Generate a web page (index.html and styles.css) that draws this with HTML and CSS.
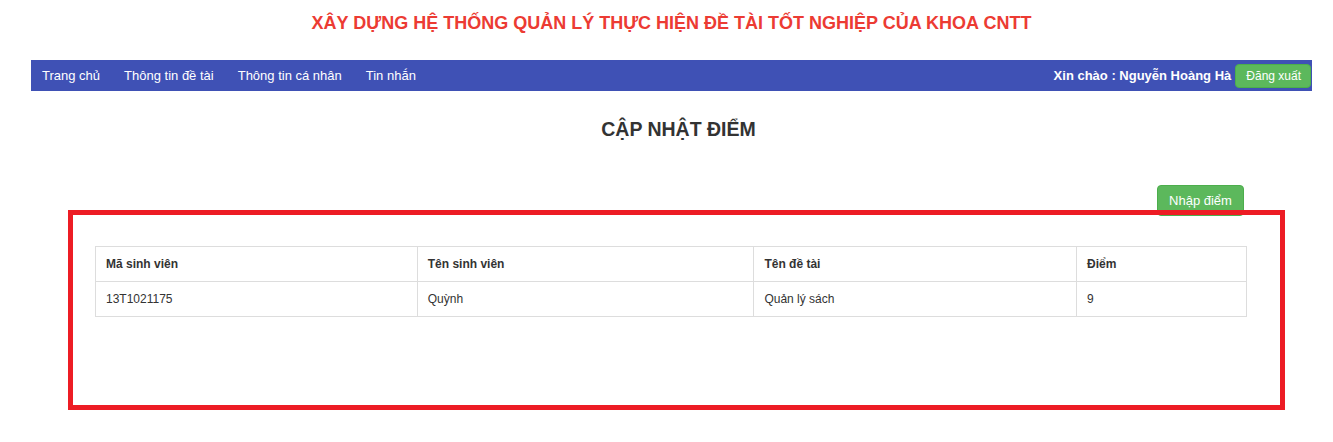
FILE: index.html
```html
<!DOCTYPE html>
<html lang="vi">
<head>
<meta charset="utf-8">
<title>Cập nhật điểm</title>
<link rel="stylesheet" href="styles.css">
</head>
<body>
<header class="site-header">
  <h1 class="site-title">XÂY DỰNG HỆ THỐNG QUẢN LÝ THỰC HIỆN ĐỀ TÀI TỐT NGHIỆP CỦA KHOA CNTT</h1>
</header>
<nav class="navbar">
  <ul class="nav-links">
    <li><a href="#">Trang chủ</a></li>
    <li><a href="#">Thông tin đề tài</a></li>
    <li><a href="#">Thông tin cá nhân</a></li>
    <li><a href="#">Tin nhắn</a></li>
  </ul>
  <div class="nav-user">
    <span class="greeting">Xin chào : Nguyễn Hoàng Hà</span>
    <a href="#" class="btn btn-logout">Đăng xuất</a>
  </div>
</nav>
<main class="main">
  <h2 class="page-title">CẬP NHẬT ĐIỂM</h2>
  <section class="grade-section">
    <div class="actions">
      <a href="#" class="btn btn-enter">Nhập điểm</a>
    </div>
    <table class="grade-table">
      <thead>
        <tr>
          <th class="col-id">Mã sinh viên</th>
          <th class="col-name">Tên sinh viên</th>
          <th class="col-topic">Tên đề tài</th>
          <th class="col-score">Điểm</th>
        </tr>
      </thead>
      <tbody>
        <tr>
          <td>13T1021175</td>
          <td>Quỳnh</td>
          <td>Quản lý sách</td>
          <td>9</td>
        </tr>
      </tbody>
    </table>
    <div class="highlight-box"></div>
  </section>
</main>
</body>
</html>
```

FILE: styles.css
```css
* { box-sizing: border-box; }
body {
  margin: 0;
  font-family: "Liberation Sans", Arial, sans-serif;
  color: #333;
  background: #fff;
}
a { text-decoration: none; }

.site-header {
  height: 60px;
  padding: 13px 0 0 10px;
}
.site-title {
  margin: 0;
  font-size: 18px;
  line-height: 20px;
  font-weight: bold;
  color: #ec3b33;
  text-align: center;
}

.navbar {
  margin: 0 21px 0 31px;
  height: 31px;
  background: #3f51b5;
  display: flex;
  justify-content: space-between;
  align-items: center;
  padding: 0 1px 0 11px;
}
.nav-links {
  list-style: none;
  margin: 0;
  padding: 0;
  display: flex;
  gap: 24px;
}
.nav-links a {
  color: #fff;
  font-size: 13px;
  line-height: 31px;
}
.nav-user {
  display: flex;
  align-items: center;
  gap: 4px;
}
.greeting {
  color: #fff;
  font-size: 13px;
  font-weight: bold;
}

.btn {
  display: inline-block;
  background: #5cb85c;
  color: #fff;
  border: 1px solid #4cae4c;
  border-radius: 4px;
  white-space: nowrap;
}
.btn-logout {
  font-size: 12px;
  height: 24px;
  line-height: 22px;
  padding: 0 9px 0 10px;
}

.main {
  padding-top: 28px;
}
.page-title {
  margin: 0;
  font-size: 19.5px;
  line-height: 20px;
  font-weight: bold;
  color: #333;
  text-align: center;
  padding-left: 24px;
}

.grade-section {
  position: relative;
  width: 1152px;
  margin: 46px 0 0 95px;
  padding-bottom: 100px;
}
.actions {
  display: flex;
  justify-content: flex-end;
  padding-right: 3px;
  margin-bottom: 30px;
}
.btn-enter {
  font-size: 13px;
  height: 31px;
  line-height: 29px;
  width: 87px;
  padding: 0;
  text-align: center;
}

.grade-table {
  width: 1152px;
  border-collapse: collapse;
  font-size: 12px;
}
.grade-table th,
.grade-table td {
  border: 1px solid #ddd;
  height: 35px;
  padding: 0 10px;
  text-align: left;
  vertical-align: middle;
}
.grade-table th { font-weight: bold; }
.col-id { width: 322px; }
.col-name { width: 337px; }
.col-topic { width: 323px; }
.col-score { width: 170px; }

.highlight-box {
  position: absolute;
  left: -27px;
  top: 25px;
  width: 1217px;
  height: 200px;
  border: 5px solid #ed1c24;
  pointer-events: none;
}
```
